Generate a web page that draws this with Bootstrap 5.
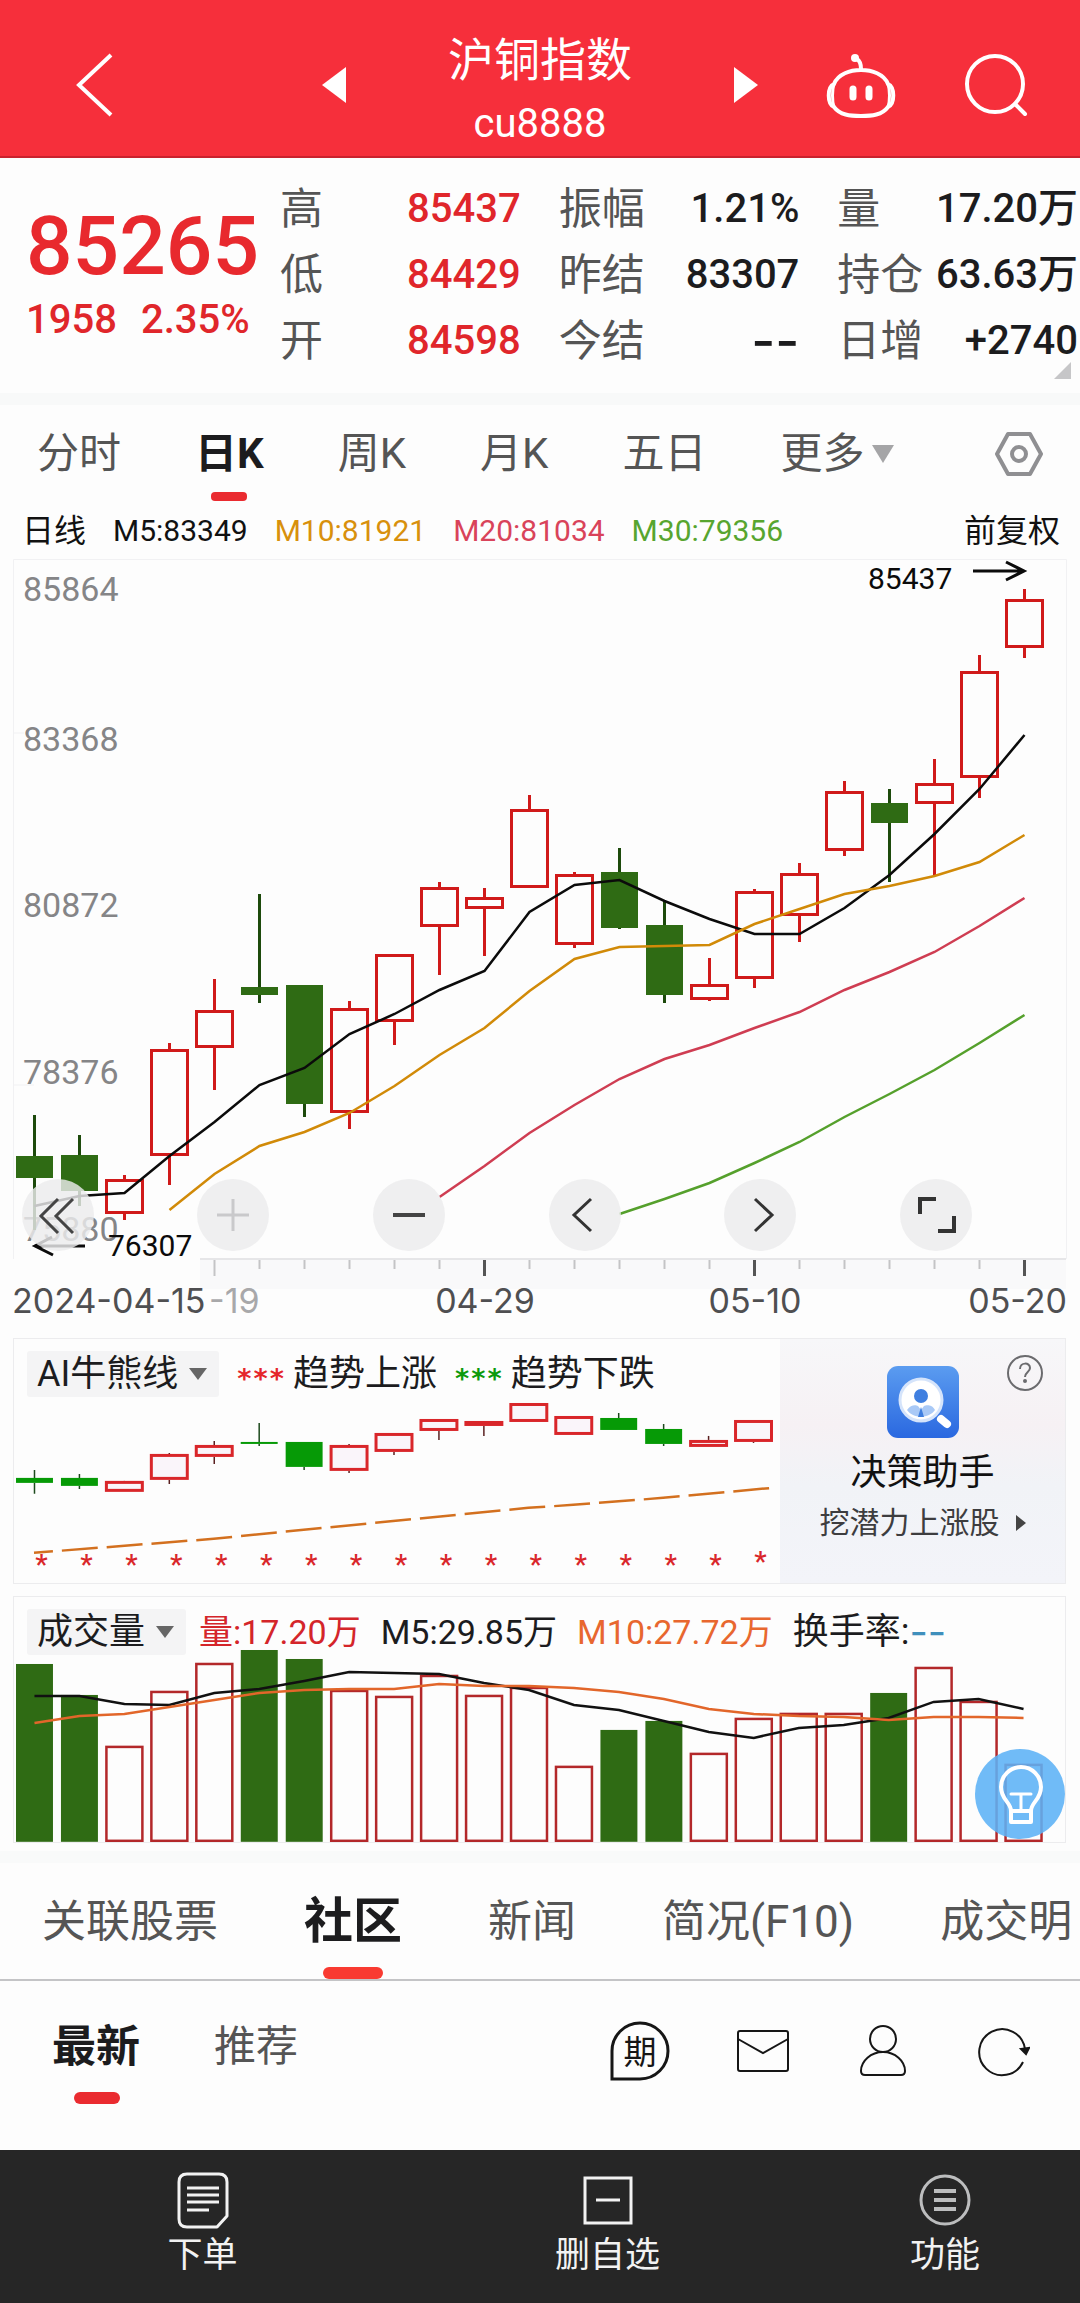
<!DOCTYPE html>
<html lang="zh-CN">
<head>
<meta charset="utf-8">
<meta name="viewport" content="width=device-width, initial-scale=1">
<title>沪铜指数 cu8888</title>
<link href="https://cdn.jsdelivr.net/npm/bootstrap@5.3.0/dist/css/bootstrap.min.css" rel="stylesheet">
<style>
  body { font-family: Roboto, "Noto Sans CJK SC", sans-serif; background: #fdfdfd; color: #1c1c1e; overflow-x: hidden; }
  button { background: none; border: 0; padding: 0; color: inherit; }
  a { color: inherit; text-decoration: none; }
  svg { display: block; }
  .topbar { display: grid; grid-template-columns: minmax(0, 1fr) auto minmax(0, 1fr); background: #f62f3b; height: 158px; color: #fff; border-bottom: 2px solid #c9222e; }
  .topbar-side { padding-top: 14px; }
  .topbar-left { padding: 14px 102px 0 75px; }
  .topbar-right { padding: 14px 52px 0 102px; }
  .topbar-tools { gap: 67px; }
  .topbar-mid { padding-top: 28px; }
  .topbar-title { font-size: 46px; line-height: 64px; font-weight: 400; }
  .topbar-code { font-size: 40px; line-height: 64px; }
  .rise { color: #e0262b; }
  .quote { padding: 18px 2px 19px 0; border-bottom: 12px solid #f8f9f9; }
  .quote-main { width: 280px; padding: 29px 0 0 26px; }
  .quote-price { font-size: 82px; line-height: 82px; font-weight: 500; color: #e8292e; }
  .quote-change { font-size: 40px; line-height: 44px; margin-top: 11px; gap: 24px; font-weight: 500; }
  .quote-grid { column-gap: 38px; }
  .quote-row { line-height: 66px; font-size: 43px; color: #555; white-space: nowrap; }
  .quote-row dd { font-size: 40px; font-weight: 500; color: #1c1c1e; margin: 0; }
  .quote-row dd.rise { color: #e0262b; }
  .dashes { font-family: Inter, sans-serif; font-size: 40px; }
  .quote-row dd.dashes { font-size: 52px; height: 66px; }
  .fold { right: 9px; bottom: 14px; }
  .period-tabs { padding: 0 37px; height: 98px; font-size: 42px; line-height: 98px; color: #555; gap: 74px; }
  .tab-on { position: relative; font-weight: 700; color: #1c1c1e; }
  .tab-on::after { content: ""; position: absolute; left: 50%; bottom: 2px; width: 36px; height: 9px; margin-left: -18px; border-radius: 4px; background: #ea2b30; }
  .ma-row { padding: 0 20px 0 22px; font-size: 30px; line-height: 56px; color: #111; gap: 27px; }
  .ma-row .cjk { font-size: 32px; }
  .c-m10 { color: #d8900c; } .c-m20 { color: #d9435a; } .c-m30 { color: #57a52f; }
  .kchart { position: relative; }
  .zoombar { position: absolute; left: 2%; right: 10%; top: 620px; }
  .zoombar button { width: 72px; height: 72px; border-radius: 50%; background: rgba(236,236,237,.82); }
  .panel { margin: 0 14px 12px 13px; border: 1px solid #ececee; }
  .legend-row { height: 60px; padding: 12px 0 0 13px; font-size: 36px; line-height: 46px; white-space: nowrap; }
  .pick { background: #f4f4f5; height: 46px; padding: 0 12px 0 10px; gap: 11px; border-radius: 3px; }
  .stars { font-family: "DejaVu Sans Mono", monospace; font-size: 27px; line-height: 56px; font-weight: 700; margin: 0 8px 0 17px; }
  .vol-legend { font-size: 34px; height: 58px; }
  .vol-legend .pick { margin-right: 13px; }
  .vol-legend .pick, .vol-legend .cjk { font-size: 36px; }
  .vol-item { margin-right: 20px; }
  .helper { width: 285px; background: linear-gradient(#f7f7f9, #f6f1f4 35%, #f1f3f7 60%, #f3f4f9); padding-top: 27px; }
  .helper-name { font-size: 36px; line-height: 48px; margin-top: 11px; color: #111; }
  .helper-note { font-size: 30px; line-height: 40px; margin-top: 6px; color: #3d3d3f; }
  .help-q { top: 16px; right: 22px; }
  .volchart { margin-top: -8px; }
  .bulb { right: 0; bottom: 3px; }
  .info-tabs { border-top: 12px solid #f9fafa; border-bottom: 2px solid #c4c4c6; height: 130px; padding: 0 0 0 42px; font-size: 44px; line-height: 118px; gap: 86px; color: #555; white-space: nowrap; }
  .info-tabs .tab-on { font-size: 49px; }
  .info-tabs .tab-on::after { bottom: 0; width: 60px; height: 12px; margin-left: -30px; border-radius: 6px; background: #f93a31; }
  .feed-bar { height: 169px; padding: 0 50px 0 52px; }
  .feed-tabs { font-size: 42px; line-height: 132px; gap: 74px; color: #555; height: 125px; }
  .feed-tabs .tab-on { font-size: 44px; }
  .feed-tabs .tab-on::after { width: 46px; height: 12px; margin-left: -22px; border-radius: 6px; }
  .feed-icons { padding-top: 40px; gap: 66px; }
  .footbar { background: #262626; color: #f2f2f2; height: 153px; font-size: 35px; line-height: 48px; padding-top: 22px; }
  .foot-wide { flex: 3 1 0; } .foot-slim { flex: 2 1 0; }
</style>
<script src="https://cdn.jsdelivr.net/npm/bootstrap@5.3.0/dist/js/bootstrap.bundle.min.js"></script>
</head>
<body>
<header class="topbar">
  <div class="topbar-left d-flex align-items-center justify-content-between">
    <button aria-label="返回"><svg width="40" height="66" viewBox="0 0 40 66" fill="none" stroke="#fff" stroke-width="4"><path d="M36 3 4 33l32 30"/></svg></button>
    <button aria-label="上一个"><svg width="24" height="36" viewBox="0 0 24 36"><path fill="#fff" d="M24 0v36L0 18z"/></svg></button>
  </div>
  <div class="topbar-mid text-center">
    <h1 class="topbar-title m-0">沪铜指数</h1>
    <div class="topbar-code">cu8888</div>
  </div>
  <div class="topbar-right d-flex align-items-center justify-content-between">
    <button aria-label="下一个"><svg width="24" height="36" viewBox="0 0 24 36"><path fill="#fff" d="M0 0v36l24-18z"/></svg></button>
    <div class="topbar-tools d-flex align-items-center">
      <button aria-label="智能助手"><svg width="72" height="68" viewBox="0 0 72 68" fill="none" stroke="#fff" stroke-width="4"><path d="M36 19C25 19 13 23 9 33c-7 3-7 20 0 23 6 8 16 9 27 9s21-1 27-9c7-3 7-20 0-23-4-10-16-14-27-14zM36 18c0-5-1-8-4-10"/><path d="M9 33c-2 6-2 17 0 23M63 33c2 6 2 17 0 23" stroke-width="3"/><circle cx="30" cy="7" r="4" fill="#fff" stroke="none"/><path d="M28 38v8M44 38v8" stroke-width="7" stroke-linecap="round"/></svg></button>
      <button aria-label="搜索"><svg width="64" height="64" viewBox="0 0 64 64" fill="none" stroke="#fff" stroke-width="4" stroke-linecap="round"><circle cx="31" cy="31" r="28"/><path d="m51 51 10 10"/></svg></button>
    </div>
  </div>
</header>

<main>
<section class="quote d-flex position-relative">
  <div class="quote-main rise">
    <div class="quote-price">85265</div>
    <div class="quote-change d-flex"><span>1958</span><span>2.35%</span></div>
  </div>
  <div class="quote-grid d-flex flex-grow-1">
    <dl class="m-0 flex-grow-1 w-100">
      <div class="quote-row d-flex justify-content-between"><dt class="fw-normal">高</dt><dd class="rise">85437</dd></div>
      <div class="quote-row d-flex justify-content-between"><dt class="fw-normal">低</dt><dd class="rise">84429</dd></div>
      <div class="quote-row d-flex justify-content-between"><dt class="fw-normal">开</dt><dd class="rise">84598</dd></div>
    </dl>
    <dl class="m-0 flex-grow-1 w-100">
      <div class="quote-row d-flex justify-content-between"><dt class="fw-normal">振幅</dt><dd>1.21%</dd></div>
      <div class="quote-row d-flex justify-content-between"><dt class="fw-normal">昨结</dt><dd>83307</dd></div>
      <div class="quote-row d-flex justify-content-between"><dt class="fw-normal">今结</dt><dd class="dashes">--</dd></div>
    </dl>
    <dl class="m-0 flex-grow-1 w-100">
      <div class="quote-row d-flex justify-content-between"><dt class="fw-normal">量</dt><dd>17.20万</dd></div>
      <div class="quote-row d-flex justify-content-between"><dt class="fw-normal">持仓</dt><dd>63.63万</dd></div>
      <div class="quote-row d-flex justify-content-between"><dt class="fw-normal">日增</dt><dd>+2740</dd></div>
    </dl>
  </div>
  <svg class="fold position-absolute" width="17" height="17" viewBox="0 0 17 17"><path fill="#c6c6c8" d="M17 0v17H0z"/></svg>
</section>

<nav class="period-tabs d-flex" aria-label="周期">
  <a href="#">分时</a><a href="#" class="tab-on">日K</a><a href="#">周K</a><a href="#">月K</a><a href="#">五日</a>
  <button class="d-flex align-items-center gap-2">更多<svg width="22" height="18" viewBox="0 0 22 18"><path fill="#a5a5a7" d="M0 0h22L11 18z"/></svg></button>
  <button class="ms-auto" aria-label="设置"><svg width="48" height="46" viewBox="0 0 48 46" fill="none" stroke="#8f8f92" stroke-width="4"><path stroke-linejoin="round" d="M13 3h22l11 20-11 20H13L2 23z"/><circle cx="24" cy="23" r="7"/></svg></button>
</nav>

<div class="ma-row d-flex">
  <span class="cjk">日线</span><span>M5:83349</span><span class="c-m10">M10:81921</span><span class="c-m20">M20:81034</span><span class="c-m30">M30:79356</span>
  <span class="cjk ms-auto">前复权</span>
</div>

<section class="kchart">
  <svg id="kline" class="w-100" viewBox="0 559 1080 779" role="img" aria-label="日K线图"></svg>
  <div class="zoombar d-flex justify-content-between">
    <button aria-label="收起"><svg width="72" height="72" viewBox="0 0 72 72" fill="none" stroke="#444" stroke-width="3"><path d="M36 20 19 37l17 17M51 20 34 37l17 17"/></svg></button>
    <button aria-label="放大"><svg width="72" height="72" viewBox="0 0 72 72" fill="none" stroke="#c9c9cb" stroke-width="3"><path d="M20 36h32M36 20v32"/></svg></button>
    <button aria-label="缩小"><svg width="72" height="72" viewBox="0 0 72 72" fill="none" stroke="#444" stroke-width="4"><path d="M20 36h32"/></svg></button>
    <button aria-label="左移"><svg width="72" height="72" viewBox="0 0 72 72" fill="none" stroke="#333" stroke-width="3"><path d="M42 20 25 36l17 16"/></svg></button>
    <button aria-label="右移"><svg width="72" height="72" viewBox="0 0 72 72" fill="none" stroke="#333" stroke-width="3"><path d="m31 20 17 16-17 16"/></svg></button>
    <button aria-label="全屏"><svg width="72" height="72" viewBox="0 0 72 72" fill="none" stroke="#333" stroke-width="4"><path d="M20 35V20h16M54 37v15H38"/></svg></button>
  </div>
</section>

<section class="panel d-flex">
  <div class="flex-grow-1">
    <div class="legend-row d-flex">
      <button class="pick d-flex align-items-center">AI牛熊线<svg width="18" height="12" viewBox="0 0 18 12"><path fill="#666" d="M0 0h18L9 12z"/></svg></button>
      <span class="stars" style="color:#e5262b">***</span><span>趋势上涨</span>
      <span class="stars" style="color:#0c9a0c">***</span><span>趋势下跌</span>
    </div>
    <svg id="trend" class="w-100" viewBox="14 1399 767 184" role="img" aria-label="AI牛熊线"></svg>
  </div>
  <div class="helper position-relative text-center flex-shrink-0">
    <svg class="mx-auto" width="72" height="72" viewBox="0 0 72 72"><defs><linearGradient id="hg" x1="0" y1="0" x2="0" y2="1"><stop offset="0" stop-color="#5b9cf0"/><stop offset="1" stop-color="#2a68e0"/></linearGradient></defs><rect width="72" height="72" rx="11" fill="url(#hg)"/><circle cx="34" cy="34" r="21" fill="#fff" stroke="#d5e4fb" stroke-width="3"/><circle cx="34" cy="30" r="7" fill="#3f7fe0"/><path d="M20 44c4-6 9-5 11-4l3 4 3-4c2-1 8-2 11 4-6 9-22 9-28 0z" fill="#a9c9f6"/><path d="m34 41 3 10h-6z" fill="#3f7fe0"/><path d="m54 53 6 5" stroke="#fff" stroke-width="8" stroke-linecap="round"/></svg>
    <div class="helper-name">决策助手</div>
    <a href="#" class="helper-note d-flex align-items-center justify-content-center">挖潜力上涨股<svg class="ms-3" width="10" height="16" viewBox="0 0 10 16"><path fill="#444" d="M0 0v16l10-8z"/></svg></a>
    <button class="help-q position-absolute" aria-label="帮助"><svg width="36" height="36" viewBox="0 0 36 36" fill="none" stroke="#6b6b6e" stroke-width="2"><circle cx="18" cy="18" r="17"/><path d="M13 14c0-7 10-7 10-1 0 4-5 4-5 9"/><circle cx="18" cy="26" r="1"/></svg></button>
  </div>
</section>

<section class="panel position-relative mb-0">
  <div class="legend-row vol-legend d-flex">
    <button class="pick d-flex align-items-center">成交量<svg width="18" height="12" viewBox="0 0 18 12"><path fill="#666" d="M0 0h18L9 12z"/></svg></button>
    <span class="vol-item" style="color:#d4252a">量:17.20万</span><span class="vol-item">M5:29.85万</span><span class="vol-item" style="color:#e8672f">M10:27.72万</span><span class="cjk">换手率:</span><span class="dashes" style="color:#3f8fbc">--</span>
  </div>
  <svg id="volume" class="volchart w-100" viewBox="14 1647 1052 195" role="img" aria-label="成交量"></svg>
  <button class="bulb position-absolute" aria-label="提示"><svg width="90" height="90" viewBox="0 0 90 90" fill="none" stroke="#fff" stroke-width="4" stroke-linejoin="round" stroke-linecap="round"><circle cx="45" cy="45" r="45" fill="#5cb2f6" fill-opacity=".88" stroke="none"/><path d="M36 62c0-9-10-11-10-24a20 20 0 0 1 40 0c0 13-10 15-10 24v0z"/><path d="M36 45h20M46 45v17" stroke-width="3"/><path d="M36 62v11h20V62"/></svg></button>
</section>

<nav class="info-tabs d-flex mt-2" aria-label="资讯">
  <a href="#">关联股票</a><a href="#" class="tab-on">社区</a><a href="#">新闻</a><a href="#">简况(F10)</a><a href="#">成交明</a>
</nav>

<div class="feed-bar d-flex justify-content-between align-items-start">
  <nav class="feed-tabs d-flex" aria-label="排序"><a href="#" class="tab-on">最新</a><a href="#">推荐</a></nav>
  <div class="feed-icons d-flex">
    <button aria-label="期货圈"><svg width="60" height="60" viewBox="0 0 60 60"><path d="M2 58V30A28 28 0 1 1 30 58z" fill="none" stroke="#161616" stroke-width="3"/><text x="30" y="43" font-size="33" text-anchor="middle" fill="#161616">期</text></svg></button>
    <button aria-label="消息"><svg width="54" height="60" viewBox="0 0 54 60" fill="none" stroke="#161616" stroke-width="2"><rect x="2" y="10" width="50" height="40" rx="2"/><path d="m2 18 25 14 25-14"/></svg></button>
    <button aria-label="我的"><svg width="54" height="60" viewBox="0 0 54 60" fill="none" stroke="#161616" stroke-width="2"><circle cx="27" cy="18" r="13"/><path d="M5 50c0-10 10-19 22-19s22 9 22 19c0 3-1 4-4 4H9c-3 0-4-1-4-4z"/></svg></button>
    <button aria-label="刷新"><svg width="54" height="60" viewBox="0 0 54 60" fill="none" stroke="#161616" stroke-width="2"><path d="M47 41A23 23 0 1 1 49 28"/><path fill="#161616" d="m45 28 8-1-3 6z"/></svg></button>
  </div>
</div>
</main>

<footer class="footbar d-flex">
  <button class="foot-wide d-flex flex-column align-items-center"><svg width="56" height="60" viewBox="0 0 56 60" fill="none" stroke="#f2f2f2" stroke-width="3"><path stroke-linejoin="round" d="M12 2h32q8 0 8 8v34L42 55H12q-8 0-8-8V10q0-8 8-8z"/><path d="M12 16h32M12 23h32M12 30h32M12 38h22"/></svg>下单</button>
  <button class="foot-wide d-flex flex-column align-items-center"><svg width="56" height="60" viewBox="0 0 56 60" fill="none" stroke="#f2f2f2" stroke-width="3"><path d="M5 6h46v45H5zM16 28h24"/></svg>删自选</button>
  <button class="foot-slim d-flex flex-column align-items-center"><svg width="56" height="60" viewBox="0 0 56 60" fill="none" stroke="#bcbdbe" stroke-width="3"><circle cx="28" cy="28" r="24"/><path d="M17 19h22M17 28h22M17 37h22" stroke-width="4"/></svg>功能</button>
</footer>

<script>
const X0 = 34.5, STEP = 45, cx = i => X0 + STEP * i;
const RED = '#d01a1a', GREEN = '#2f6b14', DARK = '#1d4a0c';
const line = (ys, from, color, w = 2) =>
  `<polyline fill="none" stroke="${color}" stroke-width="${w}" points="${ys.map((y, i) => cx(i + from) + ',' + y).join(' ')}"/>`;
// [up?, high, low, bodyTop, bodyBottom]
function candle(i, [up, hi, lo, t, b], st) {
  const x = cx(i), c = up ? st.up : st.wickDown;
  let s = `<path stroke="${up ? st.wickUp : c}" stroke-width="${st.wick}" d="M${x} ${hi}V${t}M${x} ${b}V${lo}"/>`;
  s += up ? `<rect x="${x - 18}" y="${t + 1.5}" width="36" height="${Math.max(b - t - 3, 1)}" fill="${st.fill}" stroke="${st.up}" stroke-width="${st.border}"/>`
          : `<rect x="${x - 18.5}" y="${t}" width="37" height="${b - t}" fill="${st.down}"/>`;
  return s;
}
const K = [[0,1115,1230,1156,1178],[0,1135,1206,1155,1191],[1,1175,1220,1179,1214],[1,1043,1185,1049,1156],[1,979,1090,1010,1048],[0,894,1003,987,995],[0,985,1117,985,1104],[1,1001,1129,1008,1113],[1,954,1045,954,1022],[1,882,975,887,927],[1,888,956,897,909],[1,795,888,809,888],[1,872,948,874,945],[0,848,929,872,928],[0,900,1003,925,995],[1,958,1001,984,1000],[1,889,988,891,979],[1,863,942,873,916],[1,781,856,791,851],[0,789,882,803,823],[1,759,876,783,804],[1,655,798,671,778],[1,589,658,599,648]];
let g = '<g stroke="#f1f1f3"><path fill="none" d="M13.5 1259V559.500H1066.500V1259"/><path d="M14 733h10M14 1085h20"/></g><rect x="200" y="1259" width="866" height="30" fill="#f9f9fa"/><path stroke="#e6e6e8" stroke-width="2" d="M200 1259H1066"/>';
for (let i = 4; i < 23; i++) { const big = (i - 4) % 6 === 0;
  g += `<path stroke="${big && i > 4 ? '#555' : '#c4c4c6'}" stroke-width="${big && i > 4 ? 3 : 2}" d="M${cx(i)} 1260v${big ? 16 : 9}"/>`; }
g += '<g fill="#858587" font-size="34">' + [[85864,601],[83368,751],[80872,917],[78376,1084],[75880,1241]].map(([t, y]) => `<text x="23" y="${y}">${t}</text>`).join('') + '</g>';
K.forEach((k, i) => g += candle(i, k, {up: RED, wickUp: RED, wickDown: DARK, down: GREEN, fill: 'none', wick: 3, border: 3}));
g += line([1206,1196,1193,1156,1122,1085,1068,1034,1014,990,971,912,885,880,901,919,934,934,908,875,834,789,735], 0, '#0b0b0b', 2.5);
g += line([1210,1174,1146,1132,1113,1086,1055,1028,991,959,947,946,945,924,909,894,886,876,862,835], 3, '#d18a08', 2.5);
g += line([1197,1166,1133,1105,1079,1059,1045,1028,1012,990,972,952,926,898], 9, '#cf3d52', 2.5);
g += line([1214,1199,1183,1163,1142,1117,1094,1070,1043,1015], 13, '#55a02c', 2.5);
g += '<g fill="none" stroke="#0b0b0b" stroke-width="3"><path d="M973 571h51M1006 562l18 9-18 9M85 1246H36M52 1237l-17 9 18 9"/></g>';
g += '<g fill="#0b0b0b" font-size="30"><text x="868" y="589">85437</text><text x="108" y="1256">76307</text></g>';
g += '<g fill="#4f4f51" font-size="34" font-family="Inter, sans-serif"><text x="12" y="1313">2024-04-15</text><text x="209" y="1313" fill="#a8a8aa">-19</text><text x="485" y="1313" text-anchor="middle">04-29</text><text x="755" y="1313" text-anchor="middle">05-10</text><text x="1067" y="1313" text-anchor="end">05-20</text></g>';
document.getElementById('kline').innerHTML = g;

const T = [[0,1470,1494,1478,1483],[0,1474,1489,1478,1486],[1,1482,1492,1481,1492],[1,1453,1484,1454,1480],[1,1441,1464,1445,1457],[0,1423,1446,1442,1444],[0,1442,1470,1442,1467],[1,1444,1473,1445,1471],[1,1433,1455,1433,1452],[1,1419,1440,1419,1431],[1,1421,1436,1421,1426],[1,1403,1422,1403,1422],[1,1416,1435,1416,1435],[0,1413,1430,1418,1430],[0,1424,1446,1429,1444],[1,1436,1447,1440,1447],[1,1420,1443,1420,1442]];
let t = '';
T.forEach((k, i) => t += candle(i, k, {up: '#d9262a', wickUp: '#5a2020', wickDown: '#1d4a1d', down: '#069a06', fill: '#faf5fa', wick: 1.5, border: 3}));
t += '<polyline fill="none" stroke="#d3701f" stroke-width="2.500" stroke-dasharray="36 9" stroke-dashoffset="17" points="34,1553 214,1539 304,1530 529,1508 574,1505 664,1498 773,1488"/>';
t += '<g fill="#d9262a" font-size="28" font-weight="500" text-anchor="middle">' + T.map((_, i) => `<text x="${cx(i) + 7}" y="${i === 16 ? 1571 : 1574}">*</text>`).join('') + '</g>';
document.getElementById('trend').innerHTML = t;

const V = [1664,1695,-1746,-1691,-1663,1650,1659,-1690,-1696,-1675,-1695,-1687,-1766,1730,1721,-1753,-1718,-1713,-1713,1693,-1667,-1701,-1764];
let v = V.map((y, i) => y > 0 ? `<rect x="${cx(i) - 18.5}" y="${y}" width="37" height="${1842 - y}" fill="${GREEN}"/>`
  : `<rect x="${cx(i) - 18}" y="${-y + 1}" width="36" height="${1840 + y}" fill="none" stroke="#b3282a" stroke-width="2.500"/>`).join('');
v += line([1696,1696,1704,1705,1693,1689,1681,1672,1673,1674,1683,1690,1705,1710,1721,1732,1738,1728,1725,1718,1702,1699,1709], 0, '#111', 2.5);
v += line([1723,1716,1714,1707,1700,1693,1690,1689,1689,1684,1686,1686,1688,1692,1699,1709,1714,1716,1717,1720,1717,1717,1718], 0, '#e2662a', 2.5);
document.getElementById('volume').innerHTML = v;
</script>
</body>
</html>
